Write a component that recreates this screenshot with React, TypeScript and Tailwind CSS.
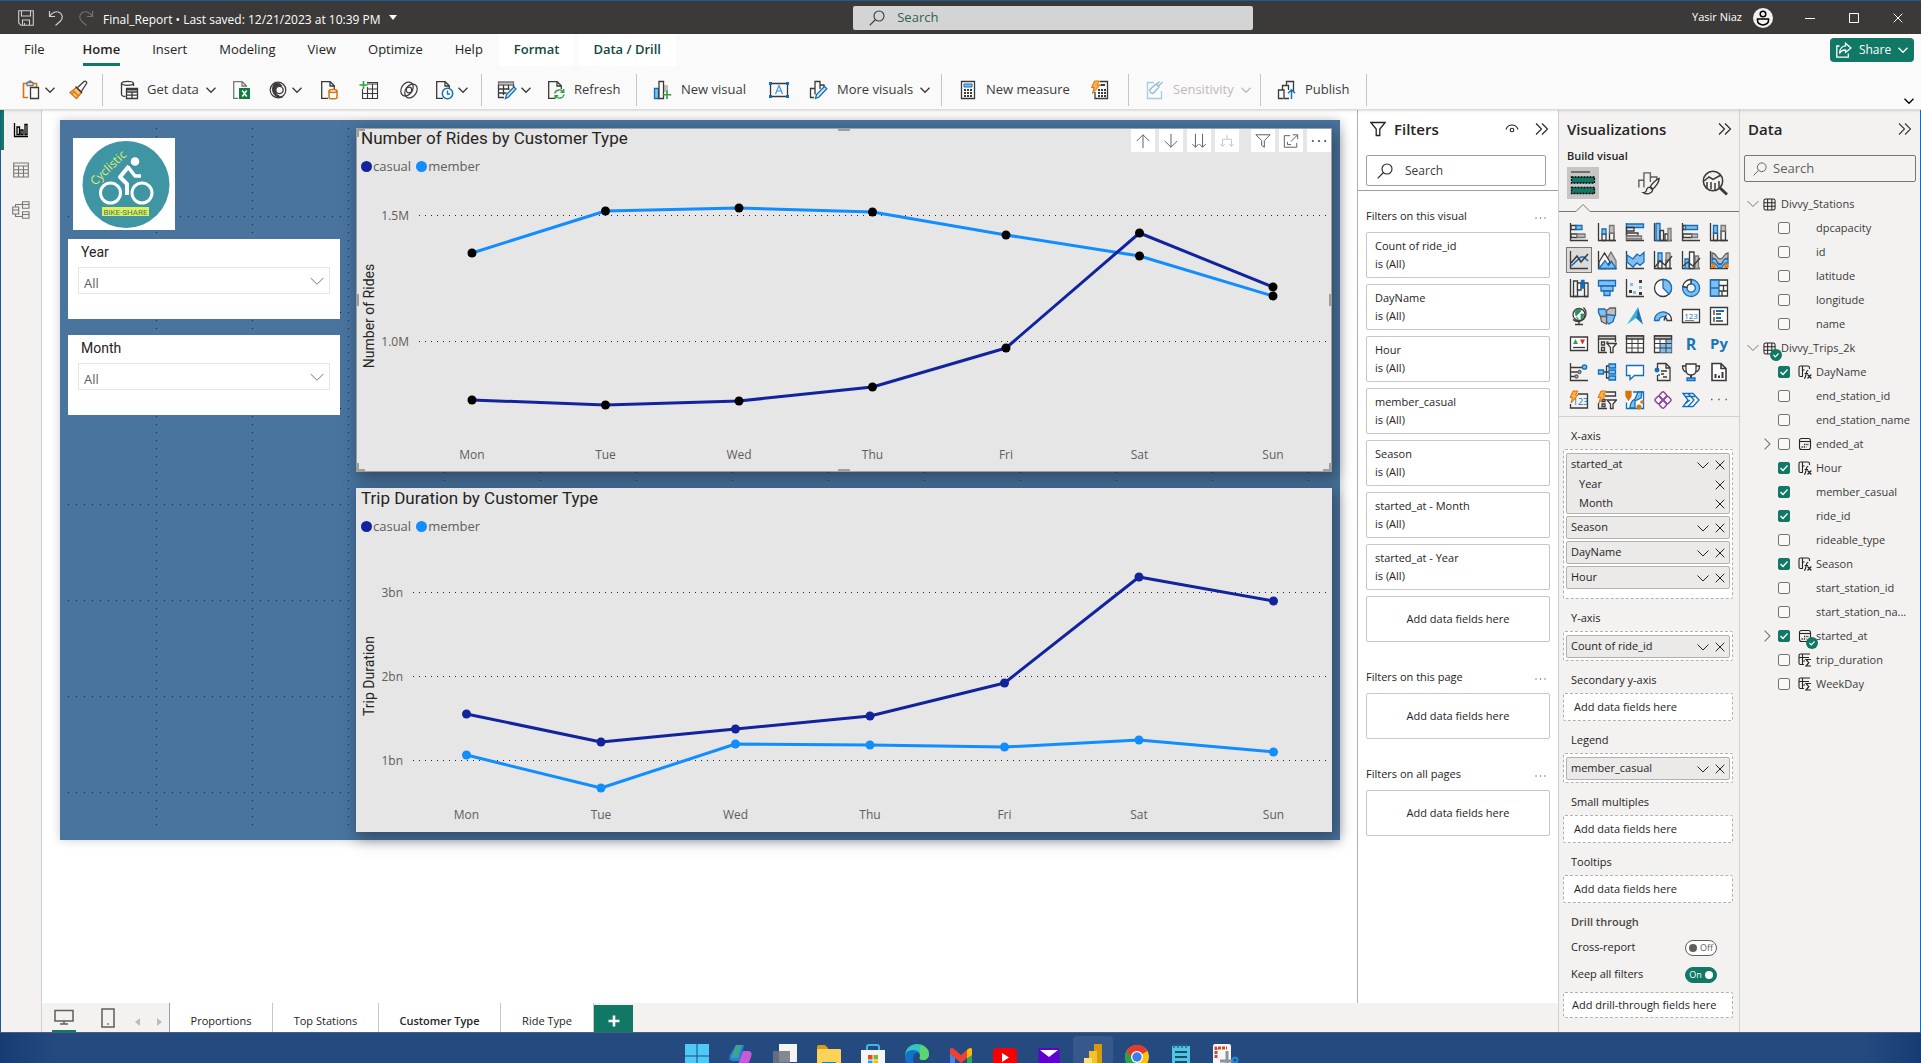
import type { ReactNode } from "react";
import clsx from "clsx";

const K = "#3b3a39";
const B = "#106ebe";
const L = "#83beec";
const G = "#c2c0be";
const O = "#d8730d";
const GREEN = "#117865";

type IconProps = { children: ReactNode; className?: string; box?: string };

const Icon = ({ children, className = "size-5", box = "0 0 20 20" }: IconProps) => (
  <svg
    viewBox={box}
    className={clsx("shrink-0", className)}
    fill="none"
    stroke="currentColor"
    strokeWidth="1.3"
    aria-hidden="true"
  >
    {children}
  </svg>
);

const ChevronDown = ({ className = "size-2.5" }: { className?: string }) => (
  <Icon box="0 0 10 10" className={className}>
    <path d="M.5 2.8 5 7.3l4.5-4.5" />
  </Icon>
);

const ChevronRight = () => (
  <Icon box="0 0 10 10" className="size-3">
    <path d="M3 .5 7.5 5 3 9.5" strokeWidth="0.9" />
  </Icon>
);

const DoubleChevron = () => (
  <Icon box="0 0 14 14" className="size-3.5">
    <path d="M1 1.5 6.5 7 1 12.5M7 1.5 12.5 7 7 12.5" strokeWidth="1.1" />
  </Icon>
);

const Magnifier = ({ className = "size-4" }: { className?: string }) => (
  <Icon box="0 0 16 16" className={className}>
    <circle cx="10" cy="6" r="5" strokeWidth="1.1" />
    <path d="M6.5 9.5.7 15.3" strokeWidth="1.1" />
  </Icon>
);

const Cross = () => (
  <Icon box="0 0 10 10" className="size-2.5">
    <path d="m.7.7 8.6 8.6m0-8.6L.7 9.3" strokeWidth="1" />
  </Icon>
);

const Dots = () => (
  <Icon box="0 0 14 4" className="h-1 w-3.5 text-[#605e5c]">
    <g fill="currentColor" stroke="none">
      <circle cx="2" cy="2" r="0.7" />
      <circle cx="6.5" cy="2" r="0.7" />
      <circle cx="11" cy="2" r="0.7" />
    </g>
  </Icon>
);

const Funnel = ({ className = "size-4" }: { className?: string }) => (
  <Icon box="0 0 16 16" className={className}>
    <path d="M.8 1.5h14.4L9.8 8v6.5H6.2V8z" />
  </Icon>
);

/* ---------- title bar ---------- */

const TitleBar = () => (
  <header className="grid h-[34px] grid-cols-[23fr_400px_18fr] items-center border-t border-[#1c5b8c] bg-[#3b3a39] text-white">
    <div className="flex items-center pl-[18px]">
      <button aria-label="Save" className="mr-[14px] text-[#d0cfce]">
        <Icon box="0 0 16 16" className="size-4">
          <path d="M.7.7h14.6v14.6H3L.7 13zM3.5 1v5h9V1M4.5 15v-5h7v5M6.5 13v2" strokeWidth="1.1" />
        </Icon>
      </button>
      <button aria-label="Undo" className="mr-[14px] text-[#d0cfce]">
        <Icon box="0 0 16 16" className="size-4">
          <path d="M1.5 1v5.5H7M1.7 6.2C4 2.5 8 .6 11.5 2.5s3.5 6 1 8.5l-5 4.5" strokeWidth="1.2" />
        </Icon>
      </button>
      <button aria-label="Redo" className="mr-[9px] text-[#73716f]">
        <Icon box="0 0 16 16" className="size-4">
          <path d="M14.5 1v5.5H9M14.3 6.2C12 2.5 8 .6 4.5 2.5s-3.5 6-1 8.5l5 4.5" strokeWidth="1.2" />
        </Icon>
      </button>
      <button className="flex items-center gap-2 pt-1 text-xs whitespace-nowrap">
        Final_Report • Last saved: 12/21/2023 at 10:39 PM
        <svg viewBox="0 0 8 5" className="mb-1 h-[5px] w-2" fill="currentColor" aria-hidden="true">
          <path d="M0 0h8L4 5z" />
        </svg>
      </button>
    </div>
    <label className="flex h-6 items-center gap-3 rounded-xs bg-[#d4d4d4] px-4 text-[#3b3a39]">
      <Magnifier />
      <input
        aria-label="Search commands"
        placeholder="Search"
        className="w-full bg-transparent text-[13px] outline-none placeholder:text-[#2f6357]"
      />
    </label>
    <div className="flex items-center justify-end pr-[18px]">
      <span className="mr-[11px] text-[11px]">Yasir Niaz</span>
      <button aria-label="Account" className="mr-8 flex size-5 items-center justify-center rounded-full bg-[#f3f2f1] text-black">
        <Icon box="0 0 20 20" className="size-5">
          <circle cx="10" cy="6" r="2.8" strokeWidth="1.5" />
          <path d="M4.5 11h11v1.5c0 2.5-2.5 4.5-5.5 4.5s-5.5-2-5.5-4.5z" strokeWidth="1.6" />
        </Icon>
      </button>
      <div className="flex gap-[34px]">
        <button aria-label="Minimize">
          <Icon box="0 0 10 10" className="size-2.5"><path d="M0 5.5h10" strokeWidth="1" /></Icon>
        </button>
        <button aria-label="Restore">
          <Icon box="0 0 10 10" className="size-2.5"><path d="M.5.5h9v9h-9z" strokeWidth="1" /></Icon>
        </button>
        <button aria-label="Close"><Cross /></button>
      </div>
    </div>
  </header>
);

/* ---------- ribbon ---------- */

const Tab = ({ name, active, tool }: { name: string; active?: boolean; tool?: boolean }) => (
  <button
    className={clsx(
      "flex h-8 items-center text-[13px]",
      tool ? "mr-1 bg-white px-[15px] font-semibold text-[#0f4a40]" : "px-4 text-[#252423]",
    )}
  >
    <span className={clsx("flex h-full items-center", active && "border-y-3 border-b-[#117865] border-t-transparent font-semibold")}>
      {name}
    </span>
  </button>
);

const Tabs = () => (
  <div className="flex items-start pl-2">
    <div className="mr-[6px]">
      <Tab name="File" />
    </div>
    <Tab name="Home" active />
    <Tab name="Insert" />
    <Tab name="Modeling" />
    <Tab name="View" />
    <Tab name="Optimize" />
    <Tab name="Help" />
    <Tab name="Format" tool />
    <Tab name="Data / Drill" tool />
    <button className="mt-1 mr-[7px] ml-auto flex h-6 w-[84px] items-center justify-center gap-[7px] rounded-sm bg-[#117865] text-xs text-white">
      <Icon box="0 0 16 16" className="size-4">
        <path d="M3.5 4H.8v11.2h11.5v-3.7" />
        <path d="M9.5 1.2 15 6l-5.500 4.500V8C6.500 8 4.500 9 3.500 11.500 3.500 7 6 4 9.500 3.800z" />
      </Icon>
      Share
      <ChevronDown />
    </button>
  </div>
);

const doc = <path d="M9 18.300H2.700V1.700h8.500l4.100 4.100V9M11 2v4h4.200" stroke={K} />;

const ribbonIcons = {
  paste: (
    <Icon>
      <path d="M7 17.500H2.500v-14H6m6 0h3.500V7" stroke={O} strokeWidth="1.6" />
      <path d="M6 2.500h6v3H6zM7.500 2.500a1.500 1.500 0 0 1 3 0" stroke="#797775" />
      <path d="M9.500 7.500h8v11h-8z" stroke={K} />
    </Icon>
  ),
  brush: (
    <Icon>
      <path d="m9 8 4 4 5.500-8.500c.8-1.200-1-3-2.200-2.200z" stroke={K} />
      <path d="M8.500 7.500 2 12.500l6.500 6 5-6z" fill="#fbc27c" stroke={O} />
      <path d="m5 10.500 5.500 5.500M3.500 13.500l3-1" stroke={O} />
      <path d="m7.500 6.500 6.500 6.500" stroke={K} />
    </Icon>
  ),
  getData: (
    <Icon>
      <g stroke={K}>
        <ellipse cx="8.500" cy="3.300" rx="6" ry="2" />
        <path d="M2.500 3.300v11.200c0 1 2 2 4 2M14.500 3.300V6" />
        <path d="M7.500 8.500h11v10h-11zM7.500 12h11M7.500 15.200h11M13 12v6.500" />
        <path d="M7.500 9.500h11" strokeWidth="2" />
      </g>
    </Icon>
  ),
  excel: (
    <Icon>
      <path d="M7 18.300H2.700V1.700h8.500l4.100 4.100V7M11 2v4h4.200" stroke="#797775" />
      <path d="M8 8h11v11H8z" fill="#107c41" stroke="none" />
      <path d="m11.300 10.500 4.400 6m0-6-4.400 6" stroke="#fff" strokeWidth="1.5" />
    </Icon>
  ),
  hub: (
    <Icon>
      <g stroke={K}>
        <circle cx="10" cy="10" r="7.800" strokeWidth="1.2" />
        <path d="M6 4C3.500 8 4 14 9 17c2 1 4 .8 5.500 0-5-.5-7.500-4-7-7.500C8 6 11 4.500 14 6c-1.500-2.500-5-4-8-2z" fill={K} strokeWidth="1" />
        <circle cx="11.500" cy="10" r="3.700" strokeWidth="1.3" />
      </g>
    </Icon>
  ),
  sql: (
    <Icon>
      {doc}
      <path d="M10 11v6.500c0 .8 1.800 1.300 4 1.300s4-.5 4-1.300V11" fill="#fff" stroke={O} strokeWidth="1.5" />
      <ellipse cx="14" cy="11" rx="4" ry="1.500" fill="#fff" stroke={O} strokeWidth="1.5" />
    </Icon>
  ),
  enter: (
    <Icon>
      <path d="M8 2.500h10.500v16h-15V9M8 4h10.500M3.500 13.500h15M8 9h10.500M8.500 7v11.500M13.500 4v14.500" stroke={K} strokeWidth="1.1" />
      <path d="M4.500 1v8M.5 5h8" stroke="#28a745" strokeWidth="1.6" />
    </Icon>
  ),
  dataverse: (
    <Icon>
      <g stroke={K} strokeWidth="1.2">
        <ellipse cx="8" cy="9" rx="5.500" ry="7.500" transform="rotate(35 8 9)" />
        <ellipse cx="12" cy="11" rx="5.500" ry="7.500" transform="rotate(35 12 11)" />
        <circle cx="10" cy="10" r="2.800" />
      </g>
    </Icon>
  ),
  recent: (
    <Icon>
      {doc}
      <circle cx="13.500" cy="13.500" r="5.200" fill="#fff" stroke={B} strokeWidth="1.5" />
      <path d="M13.500 10.500v3.500H16" stroke={B} />
    </Icon>
  ),
  transform: (
    <Icon>
      <path d="M1.500 2h15v3h-15z" fill={G} stroke="#797775" />
      <path d="M1.500 5v12.500H7M16.500 5v2M1.500 9h11M1.500 13h8M6.500 5v10M11.500 5v5" stroke={K} />
      <path d="m8.500 18.500 1-4L17 7l2 2-7.500 8z" fill="#cfe6f8" stroke={B} />
    </Icon>
  ),
  refresh: (
    <Icon>
      {doc}
      <path d="M8.800 13.500c.7-4 6.500-5 8.700-1.500m.2-3v3.300h-3.200M18 14.500c-.7 4-6.500 5-8.700 1.500m-.2 3v-3.300h3.200" stroke="#2f9e44" strokeWidth="1.4" />
    </Icon>
  ),
  newVisual: (
    <Icon>
      <path d="M1.500 8.500h4v10h-4z" fill={L} stroke={B} />
      <path d="M11 5h4v7h-4z" fill={G} stroke="none" />
      <path d="M6 1.500h4.500v17H6z" stroke={K} fill="#fff" />
      <path d="M14 10.500v8.500m-4.300-4.300h8.600" stroke="#2f9e44" strokeWidth="1.6" />
    </Icon>
  ),
  textBox: (
    <Icon>
      <path d="M1.500 3.500h17v13h-17z" stroke={K} />
      <g fill={B} stroke="none">
        <path d="M0 2h3v3H0zM17 2h3v3h-3zM0 15h3v3H0zM17 15h3v3h-3z" />
      </g>
      <path d="M6.500 14 10 5.500l3.500 8.500M7.700 11h4.600" stroke="#3a96dd" strokeWidth="1.2" />
    </Icon>
  ),
  moreVisuals: (
    <Icon>
      <path d="M5 17.500H1.500v-9H6m0 6v-13h5V9M11 5h4v2" stroke={K} />
      <path d="m6.500 18.500 1-4 8-8 2.300 2.300L10 17z" fill="#cfe6f8" stroke={B} />
    </Icon>
  ),
  measure: (
    <Icon>
      <path d="M3.500 1.500h13v17h-13z" stroke={K} fill="#fff" />
      <path d="M6 4h8v3H6z" fill={L} stroke={B} strokeWidth="1" />
      <path d="M6 10h8M6 13h8M6 16h8" stroke={K} strokeWidth="2" strokeDasharray="2 1" />
    </Icon>
  ),
  quick: (
    <Icon>
      <path d="M10 1.500h7.500v17H5V12" stroke={K} />
      <path d="M10.500 5h4.500" stroke={K} strokeWidth="2" />
      <path d="M8 10h8M8 13h8M8 16h8" stroke={K} strokeWidth="1.8" strokeDasharray="2 1" />
      <path d="M4.500 1h5L7 5h3l-7.500 8.500L4 7.500H1.500z" fill="#fbb040" stroke={O} strokeWidth="1" />
    </Icon>
  ),
  sensitivity: (
    <Icon>
      <path d="M9 2.500H2.500v16h14V11" stroke="#a9cbe2" />
      <path d="m6 13-1.500-3L11 4l3 3-6 6.500zM11.500 4.500l3-3m-1.500 5 4.500-4.500" stroke="#8fbcdb" />
    </Icon>
  ),
  publish: (
    <Icon>
      <path d="M6 18.500H1.500V10H7v8.500h5M5.500 9.500v-4h6V8M9.500 5V1.500h7V12M11.500 6v4" stroke={K} />
      <path d="M14.500 19v-9M11 13.200l3.500-3.500 3.500 3.500" stroke={B} strokeWidth="1.4" />
    </Icon>
  ),
};

type CmdProps = {
  icon: keyof typeof ribbonIcons;
  text?: string;
  label?: string;
  menu?: boolean;
  width: string;
  muted?: boolean;
};

const Cmd = ({ icon, text, label, menu, width, muted }: CmdProps) => (
  <button
    aria-label={label}
    disabled={muted}
    className={clsx(
      "flex h-8 shrink-0 items-center text-[13px] whitespace-nowrap",
      width,
      text ? "justify-start pl-2" : "justify-center",
      muted ? "text-[#bebbb8]" : "text-[#3b3a39]",
    )}
  >
    {ribbonIcons[icon]}
    {text && <span className="ml-2">{text}</span>}
    {menu && <ChevronDown className={clsx("size-2.5", text ? "ml-[7px]" : "ml-1")} />}
  </button>
);

const Group = ({ children }: { children: ReactNode }) => (
  <div className="flex items-center border-r border-[#c8c6c4] px-2">{children}</div>
);

const Ribbon = () => (
  <div className="relative z-10 h-[76px] border-b border-[#dcdbda] bg-[#fafafa] shadow-sm">
    <Tabs />
    <div className="mt-2 flex pl-[6px]">
      <Group>
        <Cmd icon="paste" label="Paste" menu width="w-12" />
        <Cmd icon="brush" label="Format painter" width="w-8" />
      </Group>
      <Group>
        <Cmd icon="getData" text="Get data" menu width="w-[110px]" />
        <Cmd icon="excel" label="Excel workbook" width="w-10" />
        <Cmd icon="hub" label="OneLake data hub" menu width="w-12" />
        <Cmd icon="sql" label="SQL Server" width="w-10" />
        <Cmd icon="enter" label="Enter data" width="w-10" />
        <Cmd icon="dataverse" label="Dataverse" width="w-10" />
        <Cmd icon="recent" label="Recent sources" menu width="w-11" />
      </Group>
      <Group>
        <Cmd icon="transform" label="Transform data" menu width="w-12" />
        <Cmd icon="refresh" text="Refresh" width="w-[90px]" />
      </Group>
      <Group>
        <Cmd icon="newVisual" text="New visual" width="w-[112px]" />
        <Cmd icon="textBox" label="Text box" width="w-11" />
        <Cmd icon="moreVisuals" text="More visuals" menu width="w-[132px]" />
      </Group>
      <Group>
        <Cmd icon="measure" text="New measure" width="w-[130px]" />
        <Cmd icon="quick" label="Quick measure" width="w-10" />
      </Group>
      <Group>
        <Cmd icon="sensitivity" text="Sensitivity" menu muted width="w-[115px]" />
      </Group>
      <Group>
        <Cmd icon="publish" text="Publish" width="w-[89px]" />
      </Group>
      <button aria-label="Collapse ribbon" className="mr-[7px] ml-auto self-end text-black">
        <ChevronDown />
      </button>
    </div>
  </div>
);

/* ---------- left rail ---------- */

const Rail = () => (
  <nav className="flex w-[42px] shrink-0 flex-col border-r border-l border-r-[#d2d0ce] border-l-[#1c5b8c] bg-[#f3f2f1] text-[#797775]">
    <button aria-label="Report view" className="flex h-10 items-center justify-center border-l-3 border-[#117865] pr-[3px] text-black">
      <Icon box="0 0 16 16" className="size-4">
        <path d="M1.500 1v13.500H15M4 5h2.500v7.500H4zM8 8h2v4.500H8zM12 2.500h2v10h-2z" />
      </Icon>
    </button>
    <button aria-label="Table view" className="flex h-10 items-center justify-center">
      <Icon box="0 0 16 16" className="size-4">
        <path d="M.7 1h14.600v14H.7zM.7 4h14.600M.7 7.700h14.600M.7 11.300h14.600M5.500 4v11M10.500 4v11" strokeWidth="1.1" />
      </Icon>
    </button>
    <button aria-label="Model view" className="flex h-10 items-center justify-center">
      <Icon box="0 0 18 18" className="size-[18px]">
        <path d="M.7 6h6v7h-6zM.7 9h6M10.500.7H17v6.500h-6.500zM10.500 3.500H17M10.500 10.700H17v6.500h-6.500zM10.500 13.500H17M3.500 6V3.500h7M3.500 13v2.500h7" strokeWidth="1.1" />
      </Icon>
    </button>
  </nav>
);

/* ---------- report page ---------- */

const Logo = () => (
  <svg viewBox="0 0 102 92" className="mt-[10px] mb-[9px] ml-[5px] h-[92px] w-[102px] bg-white" role="img" aria-label="Cyclistic Bike-Share">
    <circle cx="53" cy="46.500" r="43.500" fill="#4095a5" />
    <g stroke="#fff" fill="none" strokeWidth="3">
      <circle cx="37.500" cy="55" r="10" />
      <circle cx="69" cy="55" r="10" />
    </g>
    <circle cx="62" cy="23.500" r="4.300" fill="#fff" />
    <path d="m56 28-9 11 7 7v11" fill="none" stroke="#fff" strokeWidth="4" strokeLinejoin="round" />
    <path d="m55 29 7 9h6" fill="none" stroke="#fff" strokeWidth="3.5" strokeLinejoin="round" />
    <path id="logo-arc" d="M22 48 60 12" fill="none" />
    <text fill="#d9f26b" fontSize="12" fontFamily="Open Sans, sans-serif">
      <textPath href="#logo-arc">Cyclistic</textPath>
    </text>
    <path d="M29 69h47v9H29z" fill="#dff05f" />
    <text x="52.500" y="76.500" fill="#3a7c6b" fontSize="8" textAnchor="middle" fontFamily="Roboto, sans-serif">
      BIKE-SHARE
    </text>
  </svg>
);

const Slicer = ({ name }: { name: string }) => (
  <label className="block h-20 bg-white px-[10px] pt-[3px]">
    <span className="mb-[5px] block pl-[3px] font-[Roboto,sans-serif] text-sm leading-5 text-[#252423]">{name}</span>
    <span className="grid items-center">
      <select className="col-start-1 row-start-1 h-[27px] appearance-none border border-[#e6e6e6] pt-1 pl-[5px] text-[13px] leading-5 text-[#605e5c]">
        <option>All</option>
      </select>
      <span className="pointer-events-none col-start-1 row-start-1 mr-[6px] justify-self-end text-[#797775]">
        <Icon box="0 0 14 14" className="size-3.5">
          <path d="M.7 4 7 10.300 13.300 4" strokeWidth="1" />
        </Icon>
      </span>
    </span>
  </label>
);

const DAYS = ["Mon", "Tue", "Wed", "Thu", "Fri", "Sat", "Sun"];

type ChartProps = {
  title: string;
  axis: string;
  startX: number;
  stepX: number;
  gridX: number;
  axisY: number;
  ticks: { label: string; y: number }[];
  casual: number[];
  member: number[];
  dot?: string;
  selected?: boolean;
};

const visualTools = [
  { name: "Drill up", d: "M9 17V2M2 9l7-7 7 7" },
  { name: "Drill down", d: "M9 1v15M2 9l7 7 7-7" },
  { name: "Go to next level", d: "M5 1v15M1.5 12.5 5 16l3.5-3.5M13 1v15M9.5 12.5 13 16l3.5-3.5" },
  { name: "Expand down", d: "M9 2v5M4 15V7h10v8M1.5 12.5 4 15l2.5-2.5M11.5 12.5 14 15l2.5-2.5", faint: true },
  { name: "Filters on visual", d: "M1 2h16l-6.5 6.5V16l-3-2V8.5z", gap: true },
  { name: "Focus mode", d: "M8 3H1.5v13h14v-5M5 10v3h4M11 2h5.5v5M16 2.5 9 9.5" },
  { name: "More options", d: "M1 9h2M8 9h2M15 9h2" },
];

const Legend = () => (
  <div className="flex items-center pt-2 pl-[5px] text-[13px] leading-5 text-[#605e5c]">
    <span className="mr-px size-[11px] rounded-full bg-[#12239e]" />
    casual
    <span className="mr-px ml-[5px] size-[11px] rounded-full bg-[#118dff]" />
    member
  </div>
);

const Chart = ({ title, axis, startX, stepX, gridX, axisY, ticks, casual, member, dot, selected }: ChartProps) => {
  const series = [
    { color: "#118dff", values: member },
    { color: "#12239e", values: casual },
  ];

  return (
    <section
      className={clsx(
        "relative min-h-0 flex-1 bg-[#e6e6e6] shadow-[3px_5px_14px_2px_rgba(30,40,55,0.5)]",
        selected && "outline-1 -outline-offset-1 outline-[#a19f9d]",
      )}
    >
      <h2 className="pl-[5px] font-[Roboto,sans-serif] text-[17px] leading-5 text-[#252423]">{title}</h2>
      <Legend />
      <svg viewBox="0 0 976 344" className="absolute inset-0 size-full" role="img" aria-label={title}>
        {ticks.map((t) => (
          <g key={t.label}>
            <line x1={gridX} x2="971" y1={t.y} y2={t.y} stroke="#252423" strokeDasharray="1 5" />
            <text x={gridX - 10} y={t.y + 4} textAnchor="end" fontSize="12" fill="#605e5c">
              {t.label}
            </text>
          </g>
        ))}
        <text
          transform={`translate(18 ${axisY}) rotate(-90)`}
          textAnchor="middle"
          fontSize="14"
          fontFamily="Roboto, sans-serif"
          fill="#252423"
        >
          {axis}
        </text>
        {DAYS.map((day, i) => (
          <text key={day} x={startX + i * stepX} y="331" textAnchor="middle" fontSize="12" fill="#605e5c">
            {day}
          </text>
        ))}
        {series.map((s) => (
          <polyline
            key={s.color}
            points={s.values.map((v, i) => `${startX + i * stepX},${v}`).join(" ")}
            fill="none"
            stroke={s.color}
            strokeWidth="3"
            strokeLinejoin="round"
          />
        ))}
        {series.map((s) =>
          s.values.map((v, i) => (
            <circle key={`${s.color}${i}`} cx={startX + i * stepX} cy={v} r="4.5" fill={dot ?? s.color} />
          )),
        )}
        {selected && (
          <g stroke="#a19f9d" strokeWidth="3" fill="none">
            <path d="M1.500 9V1.500H9M967 1.500h7.500V9M974.500 335v7.500H967M9 342.500H1.500V335" />
            <path d="M482 1.500h12M482 342.500h12M1.500 166v12M974.500 166v12" />
          </g>
        )}
      </svg>
      {selected && (
        <div className="absolute top-px right-px flex gap-1">
          {visualTools.map((t) => (
            <button
              key={t.name}
              aria-label={t.name}
              className={clsx(
                "flex h-[23px] w-6 items-center justify-center bg-white",
                t.gap && "ml-2",
                t.faint ? "text-[#c8c6c4]" : "text-[#605e5c]",
              )}
            >
              <Icon box="0 0 18 18" className="size-4">
                <path d={t.d} strokeWidth={t.name === "More options" ? 2 : 1.1} />
              </Icon>
            </button>
          ))}
        </div>
      )}
    </section>
  );
};

const Canvas = () => (
  <main className="min-w-0 flex-1 bg-white pt-[10px] pr-[17px] pl-[18px]">
    <div className="relative flex aspect-video w-full gap-4 bg-[#48749e] p-2 shadow-[0_0_10px_rgba(0,0,0,0.2)]">
      <div className="absolute inset-2 bg-[radial-gradient(circle_at_0.5px_0.5px,#12304d_0.8px,transparent_1px),radial-gradient(circle_at_0.5px_0.5px,#12304d_0.8px,transparent_1px)] bg-[size:96px_8px,8px_96px] bg-[position:88px_0px,0px_88px]" />
      <div className="relative flex w-[272px] shrink-0 flex-col">
        <Logo />
        <div className="flex flex-col gap-4">
          <Slicer name="Year" />
          <Slicer name="Month" />
        </div>
      </div>
      <div className="relative flex min-w-0 flex-1 flex-col gap-4">
        <Chart
          title="Number of Rides by Customer Type"
          axis="Number of Rides"
          startX={116}
          stepX={133.5}
          gridX={63}
          axisY={188}
          ticks={[
            { label: "1.5M", y: 87.5 },
            { label: "1.0M", y: 213.5 },
          ]}
          casual={[272, 277, 273, 259, 220, 105, 159]}
          member={[125, 83, 80, 84, 107, 128, 168]}
          dot="#000"
          selected
        />
        <Chart
          title="Trip Duration by Customer Type"
          axis="Trip Duration"
          startX={110.5}
          stepX={134.5}
          gridX={57}
          axisY={188}
          ticks={[
            { label: "3bn", y: 104.5 },
            { label: "2bn", y: 188.5 },
            { label: "1bn", y: 272.5 },
          ]}
          casual={[226, 254, 241, 228, 195, 89, 113]}
          member={[267, 300, 256, 257, 259, 252, 264]}
        />
      </div>
    </div>
  </main>
);

/* ---------- filters pane ---------- */

const FILTERS = ["Count of ride_id", "DayName", "Hour", "member_casual", "Season", "started_at - Month", "started_at - Year"];

const FilterHeading = ({ text }: { text: string }) => (
  <div className="flex items-center justify-between pr-[2px] leading-4">
    <h3>{text}</h3>
    <button aria-label={`${text} options`} className="pt-1"><Dots /></button>
  </div>
);

const AddCard = () => (
  <div className="flex h-[46px] items-center justify-center rounded-xs border border-[#c8c6c4]">Add data fields here</div>
);

const FiltersPane = () => (
  <aside className="w-[201px] shrink-0 border-l border-[#b3b0ad] bg-white text-[11px] text-[#252423]">
    <div className="flex h-[38px] items-center pr-[9px] pl-3">
      <Funnel />
      <h2 className="ml-2 flex-1 text-[15px] font-semibold">Filters</h2>
      <button aria-label="Show filters" className="mr-4">
        <Icon box="0 0 14 14" className="size-3.5">
          <path d="M1 7.5C2 4.5 4.300 3 7 3s5 1.500 6 4.500" strokeWidth="1.1" />
          <circle cx="7" cy="8" r="1.8" strokeWidth="1.1" />
        </Icon>
      </button>
      <button aria-label="Collapse filters"><DoubleChevron /></button>
    </div>
    <div className="border-b border-[#a19f9d] pt-[7px] pr-3 pb-1 pl-2">
      <label className="flex h-[31px] items-center gap-3 rounded-xs border border-[#a19f9d] px-[10px]">
        <Magnifier />
        <input aria-label="Search filters" placeholder="Search" className="w-full text-xs outline-none placeholder:text-[#3b3a39]" />
      </label>
    </div>
    <div className="px-2 pt-[17px]">
      <FilterHeading text="Filters on this visual" />
      <ul className="mt-2 flex flex-col gap-[6px]">
        {FILTERS.map((f) => (
          <li key={f} className="flex h-[46px] flex-col justify-center rounded-xs border border-[#c8c6c4] pl-2 leading-[18px]">
            <span>{f}</span>
            <span>is (All)</span>
          </li>
        ))}
        <li><AddCard /></li>
      </ul>
      <div className="mt-[27px] flex flex-col gap-2">
        <FilterHeading text="Filters on this page" />
        <AddCard />
      </div>
      <div className="mt-[27px] flex flex-col gap-2">
        <FilterHeading text="Filters on all pages" />
        <AddCard />
      </div>
    </div>
  </aside>
);

/* ---------- page tabs ---------- */

const PAGES = [
  { name: "Proportions", width: "w-[103px]" },
  { name: "Top Stations", width: "w-[106px]" },
  { name: "Customer Type", width: "w-[122px]", active: true },
  { name: "Ride Type", width: "w-[93px]" },
];

const PageTabs = () => (
  <div className="flex h-[29px] shrink-0 bg-[#f3f2f1] text-[#605e5c]">
    <div className="flex w-[128px] items-center border-r border-[#a19f9d] pl-[10px]">
      <button aria-label="Desktop layout" className="flex h-full w-6 items-center justify-center border-b-2 border-[#117865]">
        <Icon box="0 0 20 16" className="h-4 w-5">
          <path d="M1 1.500h18v10.500H1zM10 12v3M6 15h8" strokeWidth="1.5" />
        </Icon>
      </button>
      <button aria-label="Mobile layout" className="mr-5 ml-[25px]">
        <Icon box="0 0 14 20" className="h-5 w-3.5">
          <path d="M1 1h12v18H1z" strokeWidth="1.5" />
          <path d="M6.200 16h1.600" strokeWidth="1.6" />
        </Icon>
      </button>
      <div className="flex gap-4 pt-2 text-[#bebbb8]">
        <button aria-label="Previous page">
          <svg viewBox="0 0 6 8" className="h-2 w-1.5" fill="currentColor"><path d="M5 0v8L0 4z" /></svg>
        </button>
        <button aria-label="Next page">
          <svg viewBox="0 0 6 8" className="h-2 w-1.5" fill="currentColor"><path d="M0 0v8l5-4z" /></svg>
        </button>
      </div>
    </div>
    {PAGES.map((p) => (
      <button
        key={p.name}
        className={clsx(
          "flex items-center justify-center border-r border-[#c8c6c4] bg-white pt-[7px] text-[11px] text-[#252423]",
          p.width,
          p.active && "font-semibold",
        )}
      >
        {p.name}
      </button>
    ))}
    <button aria-label="New page" className="mt-[2px] flex w-[39px] items-center justify-center bg-[#117865] pt-1 text-white">
      <Icon box="0 0 12 12" className="size-3"><path d="M6 .5v11M.5 6h11" strokeWidth="2.6" /></Icon>
    </button>
  </div>
);

/* ---------- visualizations pane ---------- */

const axes = <path d="M1.500 1v17.500H19" stroke={K} />;

const VISUALS: { name: string; art: ReactNode }[] = [
  {
    name: "Stacked bar chart",
    art: <>{axes}<path d="M2 3.500h5v4H2zM2 12h6v3.500H2z" stroke={K} /><path d="M7 3.500h6v4H7z" fill={L} stroke={B} /><path d="M8 12h8v3.500H8z" fill={G} stroke="#797775" /></>,
  },
  {
    name: "Stacked column chart",
    art: <>{axes}<path d="M5 12h4v6.500H5zM12.500 11H17v7.500h-4.500z" stroke={K} /><path d="M5 7h4v5H5z" fill={L} stroke={B} /><path d="M12.500 3.500H17V11h-4.500z" fill={G} stroke="#797775" /></>,
  },
  {
    name: "Clustered bar chart",
    art: <>{axes}<path d="M1.500 2h17v3.500h-17z" fill={L} stroke={B} /><path d="M1.500 5.500H9v3.500H1.500z" stroke={K} /><path d="M1.500 11h11.500v3H1.500z" stroke={K} /><path d="M1.500 14h15v3h-15z" fill={G} stroke="#797775" /></>,
  },
  {
    name: "Clustered column chart",
    art: <>{axes}<path d="M3 1.500h4v17H3z" fill={L} stroke={B} /><path d="M7 8.500h3.500v10H7zM12 12h3v6.500h-3z" stroke={K} /><path d="M15 6.500h3v12h-3z" fill={G} stroke="#797775" /></>,
  },
  {
    name: "100% stacked bar chart",
    art: <>{axes}<path d="M2 3.500h2.500v4H2zM2 12h9v3.500H2z" stroke={K} /><path d="M4.500 3.500h12v4h-12z" fill={L} stroke={B} /><path d="M11 12h5.500v3.500H11z" fill={G} stroke="#797775" /></>,
  },
  {
    name: "100% stacked column chart",
    art: <>{axes}<path d="M4.500 11h4v7.500h-4zM12 9h4.500v9.500H12z" stroke={K} /><path d="M4.500 3.500h4V11h-4z" fill={L} stroke={B} /><path d="M12 3.500h4.500V9H12z" fill={G} stroke="#797775" /></>,
  },
  {
    name: "Line chart",
    art: <>{axes}<path d="m2 16 10-9 3 0 4 4" stroke={B} strokeWidth="1.6" /><path d="m2 13 6-7 4 6 7-8" stroke={K} strokeWidth="1.5" /></>,
  },
  {
    name: "Area chart",
    art: <>{axes}<path d="m7 14 7-12 5 9v7.500H7z" fill={G} stroke="#797775" /><path d="m2 12 5.500-9 5.500 9-5 6.500H2z" fill="#fff" stroke={K} /><path d="m2 18.500 6-8 3.500 5 3-4 4.500 7z" fill={L} stroke={B} /></>,
  },
  {
    name: "Stacked area chart",
    art: <>{axes}<path d="m2 5 6 4 4-5 3 2 4-3.500V12l-4 3.500-3-2.500-4 4-6-5z" fill={L} stroke={B} /></>,
  },
  {
    name: "Line and stacked column chart",
    art: <>{axes}<path d="M5 11h4v7.500H5zM13 10h4v8.500h-4z" stroke={K} /><path d="M5 3h4v8H5z" fill={L} stroke={B} /><path d="M13 3h4v7h-4z" fill={G} stroke="#797775" /><path d="m2 17 5-6 5 4 7-9" stroke={K} /></>,
  },
  {
    name: "Line and clustered column chart",
    art: <>{axes}<path d="M4 9h4v9.500H4z" fill={L} stroke={B} /><path d="M14 6h3.500v12.500H14z" fill={G} stroke="#797775" /><path d="M8.500 2H13v16.500H8.500z" fill="#fff" stroke={K} /><path d="m2 16 5-4 5 4 7-8" stroke={K} /></>,
  },
  {
    name: "Ribbon chart",
    art: <>{axes}<path d="M3 3c5 0 4 6 8 6s4-6 8-6v5c-4 0-4 6-8 6s-3-6-8-6z" fill={G} stroke="#605e5c" /><path d="M3 9h3c2 0 2 6 5 6s3-6 5-6h3v4h-2c-2 0-3 5-6 5s-4-5-6-5H3z" fill={L} stroke={B} /><path d="M3 14h3v3H3zM16 14h3v3h-3z" fill="#f4a460" stroke={O} /></>,
  },
  {
    name: "Waterfall chart",
    art: <>{axes}<path d="M4.500 3h4v15.500h-4zM15.500 5H19v13.500h-3.500z" stroke={K} /><path d="M8.500 5H12v7H8.500z" fill="#fff" stroke={K} /><path d="M12.500 2.500H15V10h-2.500z" fill={B} stroke={B} /></>,
  },
  {
    name: "Funnel",
    art: <><path d="M1.500 2.500h17V8h-17z" fill={L} stroke={B} /><path d="M4 8h12v5H4z" fill={L} stroke={B} /><path d="M7 13h6v4.500H7z" fill={L} stroke={B} /></>,
  },
  {
    name: "Scatter chart",
    art: <>{axes}<g stroke="none"><path d="M5 5h3v3H5zM14 8h3v3h-3zM8 13h3v3H8z" fill={L} /><path d="M14 2h3v3h-3zM4 12h3v3H4zM14 14h3v3h-3z" fill={K} /></g></>,
  },
  {
    name: "Pie chart",
    art: <><circle cx="10" cy="10" r="8.500" fill="#fff" stroke={K} /><path d="M10 10V1.500a8.500 8.500 0 0 1 6 14.500z" fill={L} stroke={B} /></>,
  },
  {
    name: "Donut chart",
    art: <><circle cx="10" cy="10" r="6.300" stroke={L} strokeWidth="4.5" /><path d="M10 1.500a8.500 8.500 0 1 1-8.300 7L6 9.500A4.200 4.200 0 1 0 10 5.800z" stroke={B} /><path d="M10 1.500A8.500 8.500 0 0 0 1.700 8.500L6 9.500a4.200 4.200 0 0 1 4-3.700z" fill="#fff" stroke={K} /></>,
  },
  {
    name: "Treemap",
    art: <><path d="M1.500 2h17v16h-17z" fill="#fff" stroke={K} /><path d="M1.500 2H10v8H1.500zM1.500 10H10v8H1.500z" fill={L} stroke={B} /><path d="M10 7.500h8.500M14.500 7.500V13M10 13h8.500M13 13v5" stroke={K} /></>,
  },
  {
    name: "Map",
    art: <><circle cx="10" cy="8.500" r="6" stroke={K} fill="#fff" /><path d="M6 6c2-3 4-3 5-3l1 2-3 3-2 2zM12 8l3 0-1 4-2 1zM7 11l2 1v2" fill="#2f8f5b" stroke="#2f8f5b" strokeWidth="0.8" /><path d="M14.500 1.500c5 5 2 13-5 14-2 0-4-.5-5.500-2M10 16v2.500M6 18.500h8" stroke={K} /></>,
  },
  {
    name: "Filled map",
    art: <><path d="M1.500 3h6l2 1.500v6l-6 0-2-4z" fill={L} stroke={B} /><path d="M9.500 4.500 13 2h5.500v7l-5 1.500-4-2z" fill={G} stroke="#605e5c" /><path d="M9.500 8.500 18 9.500l-2 6-4 2.500-2.500-2z" fill={L} stroke={B} /><path d="m3.500 10.500 1 5 5 2.500v-7.500z" fill={G} stroke="#605e5c" /></>,
  },
  {
    name: "Azure map",
    art: <><path d="M13 1 2 18.500l9-6.500z" fill="#37b3d9" stroke="none" /><path d="m13 1 5 17.500-7-6.500z" fill="#1c72b8" stroke="none" /></>,
  },
  {
    name: "Gauge",
    art: <><path d="M1.500 14.500a8.500 8.500 0 0 1 14-6.500l-3 3.500a4 4 0 0 0-6.500 3z" fill={L} stroke={B} /><path d="M15 7.500c2.200 1.500 3.500 4 3.500 7H14c0-1.200-.5-2.500-1.500-3" fill="#fff" stroke={K} /><path d="m11 14.500 2-5" stroke={K} strokeWidth="1.6" /></>,
  },
  {
    name: "Card",
    art: <><path d="M1.500 3.500h17v13h-17z" fill="#fff" stroke={K} /><text x="10" y="12.500" fontSize="8" textAnchor="middle" fill={B} stroke="none">123</text><path d="M4 14.500h9" stroke="#605e5c" strokeWidth="0.8" /></>,
  },
  {
    name: "Multi-row card",
    art: <><path d="M1.500 1.500h17v17h-17z" fill="#fff" stroke={K} /><path d="M5 4v5M5 11v5" stroke={K} /><path d="M7 5h8M7 12h5" stroke={B} strokeWidth="1.8" /><path d="M7 8h5M7 15h7" stroke={K} /></>,
  },
  {
    name: "KPI",
    art: <><path d="M1.500 3h17v13.500h-17z" fill="#fff" stroke={K} /><path d="m4 10 2.500-5L9 10z" fill="#2f9e5b" stroke="none" /><path d="m11 5.500 2.500 5 2.500-5z" fill="#d92c2c" stroke="none" /><path d="M4 13.500h12" stroke={K} /></>,
  },
  {
    name: "Slicer",
    art: <><path d="M1.500 2h17v3h-17z" fill={G} stroke={K} /><path d="M1.500 5v13.500H10M18.500 5v3M4.500 8h3v3h-3zM4.500 13.500h3v3h-3zM9.500 8h2" stroke={K} /><path d="M10 9.500h9.500L16 13.500v5h-2.500v-5z" fill="#fff" stroke={K} /></>,
  },
  {
    name: "Table",
    art: <><path d="M1.500 2h17v16.500h-17z" fill="#fff" stroke={K} /><path d="M1.500 2h17v3h-17z" fill={G} stroke={K} /><path d="M1.500 9.500h17M1.500 14h17M7 5v13.500M13 5v13.500" stroke={K} strokeWidth="1" /></>,
  },
  {
    name: "Matrix",
    art: <><path d="M1.500 2h17v16.500h-17z" fill="#fff" stroke={K} /><path d="M7 9.500h11.500v9H7z" fill={L} stroke="none" /><path d="M13 5h5.500v4.500H13z" fill={L} stroke="none" /><path d="M1.500 2h17v3h-17z" fill={G} stroke={K} /><path d="M1.500 9.500h17M1.500 14h17M7 5v13.500M13 5v13.500" stroke={K} strokeWidth="1" /></>,
  },
  {
    name: "R script visual",
    art: <text x="10" y="16" fontSize="16" fontWeight="700" textAnchor="middle" fill="#1b75bb" stroke="none">R</text>,
  },
  {
    name: "Python visual",
    art: <text x="10" y="15" fontSize="15" fontWeight="700" textAnchor="middle" fill="#1b75bb" stroke="none">Py</text>,
  },
  {
    name: "Key influencers",
    art: <>{axes}<path d="M2 5.500h11M2 10h7M2 14.500h4" stroke={K} /><circle cx="15.500" cy="5" r="2.200" fill={L} stroke={B} /><circle cx="10.500" cy="10" r="1.500" fill={G} stroke="#605e5c" /><circle cx="7.500" cy="14.500" r="1.500" fill={G} stroke="#605e5c" /></>,
  },
  {
    name: "Decomposition tree",
    art: <><path d="M6 10h3.500M12 4H9.500v12H12M9.500 10H12" stroke={K} /><path d="M1.500 8h5v4h-5zM12 2h6.500v4H12zM12 8h6.500v4H12zM12 14h6.500v4H12z" fill={L} stroke={B} /></>,
  },
  {
    name: "Q&A",
    art: <path d="M1.500 3.500h17v10h-9L5 17.500v-4H1.500z" fill="#fff" stroke={B} />,
  },
  {
    name: "Smart narrative",
    art: <><path d="M4.500 9V1.500H13l4 4v13H4.500V13M13 2v4h4" stroke={K} /><path d="M8 9h6M8 12h3M10 15h4" stroke={K} /><circle cx="4" cy="8" r="1.800" fill={B} stroke={B} /><path d="M5 13h2" stroke={B} /></>,
  },
  {
    name: "Goals",
    art: <><path d="M5 2h10v6c0 3-2 5-5 5s-5-2-5-5z" fill="#fff" stroke={K} /><path d="M5 4H1.500c0 4 1.500 5.500 4 6M15 4h3.500c0 4-1.500 5.500-4 6" stroke={K} /><path d="M10 13v3" stroke={K} strokeWidth="2" /><path d="M6 16h8v2.500H6z" fill={L} stroke={B} /></>,
  },
  {
    name: "Paginated report",
    art: <><path d="M3 1.500h9l5 5v12H3zM12 1.500v5h5" fill="#fff" stroke={K} strokeWidth="1.6" /><path d="M6.500 16v-4M10 16v-2.500M13.500 16V10" stroke={K} strokeWidth="2" /></>,
  },
  {
    name: "Card (new)",
    art: <><path d="M9 4h9.500v14H1.500v-4" stroke={K} fill="none" /><text x="11.500" y="14.500" fontSize="9" textAnchor="middle" fill={B} stroke="none">123</text><path d="M4 1h5L6.500 5H9l-7 8 1.500-5.500H1z" fill="#fbb040" stroke={O} strokeWidth="1" /></>,
  },
  {
    name: "Slicer (new)",
    art: <><path d="M9 2h9.500v4H8M1.500 13v5.500H10M5 9.500h3v2H5zM5 14h3v2.500H5z" stroke={K} /><path d="M10 10h9.500L16 14v4.500h-2.500V14z" fill="#fff" stroke={K} /><path d="M4 1h5L6.500 5H9l-7 8 1.500-5.500H1z" fill="#fbb040" stroke={O} strokeWidth="1" /></>,
  },
  {
    name: "ArcGIS Maps",
    art: <><path d="M8 2h10.500v16.500h-17v-6" fill="#fff" stroke={B} /><path d="M13 2h4l-1 6-6 3v7H5c0-4 1-7 5-9z" fill={L} stroke={B} /><path d="M1 1.500h5v4.500L3.500 10 1 6z" fill={O} stroke={O} /><circle cx="17" cy="12" r="1.800" fill={O} stroke="none" /><circle cx="14" cy="17" r="2.500" fill={O} stroke="none" /></>,
  },
  {
    name: "Power Apps",
    art: (
      <g stroke="#8a3fa0" strokeWidth="1.4">
        <rect x="7" y="2.500" width="6" height="6" rx="1.500" transform="rotate(45 10 5.500)" />
        <rect x="7" y="11.500" width="6" height="6" rx="1.500" transform="rotate(45 10 14.500)" />
        <rect x="2.500" y="7" width="6" height="6" rx="1.500" transform="rotate(45 5.500 10)" />
        <rect x="11.500" y="7" width="6" height="6" rx="1.500" transform="rotate(45 14.500 10)" />
      </g>
    ),
  },
  {
    name: "Power Automate",
    art: <><path d="M2 3.500h10l6 6.500-6 6.500H2l5-6.500z" fill="#fff" stroke={B} /><path d="M7 3.500 13 10l-6 6.500M4 6.500h10M4.500 13.500 9 10" stroke={B} /></>,
  },
  {
    name: "Get more visuals",
    art: <path d="M2 9.500h1.500M9.200 9.500h1.500M16.500 9.500H18" stroke="#605e5c" strokeWidth="1.5" />,
  },
];

const Pill = ({ name, children }: { name: string; children?: ReactNode }) => (
  <div className="rounded-xs border border-[#b3b0ad] bg-[#ebeae9]">
    <div className="flex h-[21px] items-center pr-1 pl-1">
      <span className="flex-1">{name}</span>
      <button aria-label={`${name} menu`} className="mr-[6px]">
        <Icon box="0 0 12 12" className="size-3"><path d="m.5 3.500 5.500 5.500 5.500-5.500" strokeWidth="1" /></Icon>
      </button>
      <button aria-label={`Remove ${name}`}><Cross /></button>
    </div>
    {children}
  </div>
);

const SubField = ({ name }: { name: string }) => (
  <div className="flex h-[19px] items-center pr-1 pl-3">
    <span className="flex-1">{name}</span>
    <button aria-label={`Remove ${name}`}><Cross /></button>
  </div>
);

const Well = ({ title, children }: { title: string; children?: ReactNode }) => (
  <section>
    <h3 className="flex h-8 items-center pt-[6px] pl-2">{title}</h3>
    {children ? (
      <div className="flex flex-col gap-[2px] rounded-xs border border-dashed border-[#b3b0ad] bg-white px-[2px] pt-[3px] pb-[2px]">{children}</div>
    ) : (
      <div className="flex h-7 items-center rounded-xs border border-dashed border-[#b3b0ad] bg-white pl-[10px]">Add data fields here</div>
    )}
  </section>
);

const Toggle = ({ name, on }: { name: string; on?: boolean }) => (
  <label className="flex h-[27px] items-center justify-between pr-4 pl-2">
    {name}
    <input type="checkbox" role="switch" defaultChecked={on} className="sr-only" />
    <span
      className={clsx(
        "flex h-4 w-8 items-center justify-center gap-[3px] rounded-full border text-[9px] leading-none",
        on ? "flex-row-reverse border-[#117865] bg-[#117865] text-white" : "border-[#605e5c] bg-white text-[#605e5c]",
      )}
    >
      <span className={clsx("size-2 rounded-full", on ? "bg-white" : "bg-[#605e5c]")} />
      {on ? "On" : "Off"}
    </span>
  </label>
);

const VisualizationsPane = () => (
  <aside className="flex w-[182px] shrink-0 flex-col border-x border-[#d2d0ce] bg-[#f3f2f1] text-[11px] text-[#252423]">
    <div className="flex h-[38px] items-center justify-between pr-[7px] pl-2">
      <h2 className="text-[15px] font-semibold">Visualizations</h2>
      <button aria-label="Collapse visualizations"><DoubleChevron /></button>
    </div>
    <h3 className="pl-2 leading-4 font-semibold">Build visual</h3>
    <div className="flex items-center justify-between pt-[3px] pr-2 pl-2">
      <button aria-label="Build visual" className="flex size-8 items-center justify-center bg-[#c8c6c4]">
        <Icon box="0 0 26 26" className="size-[26px]">
          <path d="M1 2h19" stroke={K} strokeWidth="1.2" />
          <path d="M1.500 7h23v6h-23zM1.500 17.500h23v6h-23z" fill={GREEN} stroke="#000" strokeDasharray="2 1" />
        </Icon>
      </button>
      <button aria-label="Format visual" className="flex size-8 items-center justify-center">
        <Icon box="0 0 26 26" className="size-6">
          <path d="M2 18v-8h5.500M7.500 18V2h7v10M14.500 6.500h7v3" stroke="#605e5c" strokeWidth="1.5" />
          <path d="M24 8c-3 1-8 6-9.500 9l2.500 2.500C20 17.500 24 12 24 8zM14 17.500c-3 0-3.500 2-4 4-.5 1.500-2 2-3 2 3 2 9 1.500 10-3z" fill="#f3f2f1" stroke={K} strokeWidth="1.5" />
        </Icon>
      </button>
      <button aria-label="Analytics" className="flex size-8 items-center justify-center">
        <Icon box="0 0 26 26" className="size-[26px]">
          <circle cx="11" cy="11" r="9.700" stroke={K} strokeWidth="1.5" />
          <path d="m2 11 5-4 4 2.500L19 5M5 18v-6M9 19v-7M13 20v-7M17 18v-7" stroke={K} strokeWidth="1.5" />
          <path d="m18 18 7 6.500" stroke={K} strokeWidth="3" />
        </Icon>
      </button>
    </div>
    <svg viewBox="0 0 180 10" preserveAspectRatio="xMinYMid slice" className="mt-1 h-[10px] w-full" fill="none" stroke="#797775" aria-hidden="true">
      <path d="M0 8.500h17l7-7 7 7h149" />
    </svg>
    <div className="grid grid-cols-6 border-b border-[#d2d0ce] px-[6px] pt-[5px] pb-[2px]">
      {VISUALS.map((v) => (
        <button
          key={v.name}
          aria-label={v.name}
          className={clsx(
            "m-px flex h-[26px] items-center justify-center",
            v.name === "Line chart" && "border border-[#797775] bg-[#dcdbda]",
          )}
        >
          <Icon>{v.art}</Icon>
        </button>
      ))}
    </div>
    <div className="pr-[6px] pl-1">
      <Well title="X-axis">
        <Pill name="started_at">
          <SubField name="Year" />
          <SubField name="Month" />
        </Pill>
        <Pill name="Season" />
        <Pill name="DayName" />
        <Pill name="Hour" />
        <div className="h-[5px]" />
      </Well>
      <Well title="Y-axis"><Pill name="Count of ride_id" /></Well>
      <Well title="Secondary y-axis" />
      <Well title="Legend"><Pill name="member_casual" /></Well>
      <Well title="Small multiples" />
      <Well title="Tooltips" />
      <h3 className="flex h-[31px] items-center pt-[7px] pl-2 font-semibold text-[#494745]">Drill through</h3>
      <Toggle name="Cross-report" />
      <Toggle name="Keep all filters" on />
      <div className="mt-1 flex h-[26px] items-center rounded-xs border border-dashed border-[#b3b0ad] bg-white pl-2 whitespace-nowrap">
        Add drill-through fields here
      </div>
    </div>
  </aside>
);

/* ---------- data pane ---------- */

type Field = { name: string; on?: boolean; icon?: "fx" | "date" | "sum"; open?: boolean; mark?: boolean };

const TABLES: { name: string; used?: boolean; fields: Field[] }[] = [
  {
    name: "Divvy_Stations",
    fields: [{ name: "dpcapacity" }, { name: "id" }, { name: "latitude" }, { name: "longitude" }, { name: "name" }],
  },
  {
    name: "Divvy_Trips_2k",
    used: true,
    fields: [
      { name: "DayName", on: true, icon: "fx" },
      { name: "end_station_id" },
      { name: "end_station_name" },
      { name: "ended_at", icon: "date", open: true },
      { name: "Hour", on: true, icon: "fx" },
      { name: "member_casual", on: true },
      { name: "ride_id", on: true },
      { name: "rideable_type" },
      { name: "Season", on: true, icon: "fx" },
      { name: "start_station_id" },
      { name: "start_station_na..." },
      { name: "started_at", on: true, icon: "date", open: true, mark: true },
      { name: "trip_duration", icon: "sum" },
      { name: "WeekDay", icon: "sum" },
    ],
  },
];

const fieldIcons = {
  fx: (
    <Icon box="0 0 14 14" className="size-3.5">
      <path d="M5 11.500H2.500Q1 11.500 1 10V2.500Q1 1 2.500 1H10q1.500 0 1.500 1.500V4M4.500 1v10.500M4.500 5h2" strokeWidth="1.1" />
      <path d="M6 13.300c1.500 0 1.500-1 2-4s.7-4 2.300-4M6.700 8.500H10M9.500 9.500l3.800 4m0-4-3.800 4" strokeWidth="1.1" />
    </Icon>
  ),
  date: (
    <Icon box="0 0 14 14" className="size-3.5">
      <rect x="1.500" y="1.500" width="11" height="11" rx="2" strokeWidth="1.1" />
      <path d="M1.500 4.500h11" strokeWidth="1.1" />
      <path d="M6 7.500h5M3.500 10h5" strokeDasharray="1.3 1" />
    </Icon>
  ),
  sum: (
    <Icon box="0 0 14 14" className="size-3.5">
      <path d="M6 11.500H2.500Q1 11.500 1 10V2.500Q1 1 2.500 1H12M4.500 1v10.500M1 4.500h10M4.500 8H7" strokeWidth="1.1" />
      <path d="M13 6.500H8l2.800 3.200L8 13h5" strokeWidth="1.2" />
    </Icon>
  ),
};

const UsedBadge = () => (
  <svg viewBox="0 0 12 12" className="absolute -right-1.5 -bottom-1.5 size-3" aria-hidden="true">
    <circle cx="6" cy="6" r="6" fill={GREEN} />
    <path d="m3.500 6 1.800 1.800 3.200-3.300" fill="none" stroke="#fff" strokeWidth="1.2" />
  </svg>
);

const FieldRow = ({ field }: { field: Field }) => (
  <li className="flex h-6 items-center">
    <span className="flex w-[38px] justify-end pr-[5px] text-[#797775]">{field.open && <ChevronRight />}</span>
    <label className="flex items-center">
      <span className="grid size-3 place-items-center">
        <input
          type="checkbox"
          defaultChecked={field.on}
          className="peer col-start-1 row-start-1 size-3 appearance-none rounded-xs border border-[#797775] bg-[#faf9f8] checked:border-[#117865] checked:bg-[#117865]"
        />
        <svg viewBox="0 0 12 12" className="pointer-events-none col-start-1 row-start-1 hidden size-3 peer-checked:block" fill="none" stroke="#fff" strokeWidth="1.3">
          <path d="m2.500 6 2.500 2.500 4.500-5" />
        </svg>
      </span>
      <span className="relative mr-1 ml-2 flex size-3.5 items-center text-[#252423]">
        {field.icon && fieldIcons[field.icon]}
        {field.mark && <UsedBadge />}
      </span>
      <span className="whitespace-nowrap">{field.name}</span>
    </label>
  </li>
);

const DataPane = () => (
  <aside className="w-[181px] shrink-0 border-r border-[#1469b5] bg-[#f3f2f1] text-[11px] text-[#3b3a39]">
    <div className="flex h-[38px] items-center justify-between px-2">
      <h2 className="text-[15px] font-semibold text-[#252423]">Data</h2>
      <button aria-label="Collapse data"><DoubleChevron /></button>
    </div>
    <div className="px-1 pt-[7px]">
      <label className="flex h-[27px] items-center gap-[6px] rounded-xs border border-[#797775] px-2 text-[#605e5c]">
        <Magnifier className="size-3.5" />
        <input aria-label="Search data" placeholder="Search" className="w-full bg-transparent text-[13px] outline-none placeholder:text-[#605e5c]" />
      </label>
    </div>
    <div className="pt-[10px]">
      {TABLES.map((t) => (
        <section key={t.name}>
          <h3 className="flex h-6 items-center pl-[7px]">
            <button aria-label={`Toggle ${t.name}`} className="mr-1 text-[#797775]">
              <Icon box="0 0 12 12" className="size-3"><path d="m.5 3 5.500 5.500L11.500 3" strokeWidth="1" /></Icon>
            </button>
            <span className="relative mr-[5px] text-[#252423]">
              <Icon box="0 0 14 14" className="size-[13px]">
                <rect x="1" y="1" width="12" height="12" rx="2" strokeWidth="1.1" />
                <path d="M1 5h12M1 9h12M5 1v12M9.500 1v12" strokeWidth="1.1" />
              </Icon>
              {t.used && <UsedBadge />}
            </span>
            {t.name}
          </h3>
          <ul>
            {t.fields.map((f) => (
              <FieldRow key={f.name} field={f} />
            ))}
          </ul>
        </section>
      ))}
    </div>
  </aside>
);

/* ---------- taskbar ---------- */

const APPS: { name: string; art: ReactNode; active?: boolean }[] = [
  { name: "Start", art: <path d="M0 0h11.500v11.500H0zM12.500 0H24v11.500H12.500zM0 12.500h11.500V24H0zM12.500 12.500H24V24H12.500z" fill="#4fc9f7" /> },
  {
    name: "Copilot",
    art: <><path d="M7 1h8l-4 16H4c-4 0-4-3-3-6z" fill="#2b7de0" /><path d="M7 1h6L9 14H2z" fill="#43b66b" opacity="0.7" /><path d="m14 7h5c4 0 4 3 3 6l-3 8H9z" fill="#c85ad6" /><path d="M6 19h18v5H6z" fill="#f9b233" /><path d="M9 20v3M13 20v3M17 20v3M21 20v3" stroke="#5c3b00" /></>,
  },
  { name: "Task view", art: <><path d="M6 0h18v18H6z" fill="#f4f4f4" /><path d="M0 7h17v17H0z" fill="#6f7680" opacity="0.85" /></> },
  { name: "File Explorer", art: <><path d="M0 3q0-2 2-2h6l3 3v4H0z" fill="#d99c1a" /><path d="M0 6q0-1 1-1h22q1 0 1 1v18H0z" fill="#fcd257" /><path d="M5 18h14v6H5z" fill="#1b7cc8" /></> },
  { name: "Microsoft Store", art: <><path d="M6 7V3q0-2 2-2h8q2 0 2 2v4" fill="none" stroke="#3cb8e8" strokeWidth="2" /><path d="M0 6h24v18H0z" fill="#f5f5f5" /><path d="M7 11h4.500v4.500H7z" fill="#e74c26" /><path d="M12.500 11H17v4.500h-4.500z" fill="#7db928" /><path d="M7 16.500h4.500V21H7z" fill="#1fa4e8" /><path d="M12.500 16.500H17V21h-4.500z" fill="#fcb813" /></> },
  { name: "Edge", art: <><path d="M0 13C0 5 5 0 12 0s12 5 12 10c0 4-3 6-6 6-3 0-4-1.500-3-4 0-3-2-5-5-5-4 0-7 4-7 8z" fill="#35c4c4" /><path d="M15 1c6 1 9 5 9 9 0 4-3 6-6 6-3 0-4-1-3-3z" fill="#5bd66c" /><path d="M0 13c0-4 3-7 8-7 3 0 5 1 6 3-4-1-6 2-6 6 0 5 3 8 7 9H10C4 23 0 19 0 13z" fill="#1470c8" /></> },
  { name: "Gmail", art: <><path d="M1 6h5v18H1z" fill="#4285f4" /><path d="M18 6h5v18h-5z" fill="#34a853" /><path d="M1 5q2-2 4 0l7 6 7-6q2-2 4 0v5l-11 9L1 10z" fill="#ea4335" /><path d="M18 6q5-4 5 0v5l-5 3z" fill="#fbbc04" /></> },
  { name: "YouTube", art: <><rect y="4" width="24" height="20" rx="4" fill="#f60000" /><path d="M9 9v9l7-4.500z" fill="#fff" /></> },
  { name: "Yahoo Mail", art: <><rect x="1.500" y="4" width="21" height="22" rx="1" fill="#5f01d1" /><path d="M3 6h18l-9 7z" fill="#fff" /></> },
  { name: "Power BI", active: true, art: <><path d="M13 0h8v24h-8z" fill="#d69a0b" /><path d="M8 7h8v17H8z" fill="#f2c230" /><path d="M3 14h8v10H3z" fill="#fde27c" /></> },
  { name: "Chrome", art: <><circle cx="12" cy="13" r="12" fill="#fbc116" /><path d="M12 13 1.600 7A12 12 0 0 1 22.400 7z" fill="#e33b2e" /><path d="M12 13 1.600 7A12 12 0 0 0 10 25z" fill="#2da14c" /><path d="M12 7h10.500A12 12 0 0 0 1.600 7L6 13z" fill="#e33b2e" /><circle cx="12" cy="13" r="6" fill="#fff" /><circle cx="12" cy="13" r="4.700" fill="#3b7ded" /></> },
  { name: "Notepad", art: <><path d="M3 2h18v24H3z" fill="#51c3e3" /><path d="M5 0v4M9 0v4M13 0v4M17 0v4" stroke="#1d6f8c" strokeWidth="1.5" /><path d="M6 8h12M6 13h12M6 18h12" stroke="#12506e" strokeWidth="2" /></> },
  { name: "Snipping Tool", art: <><rect width="18" height="21" rx="2" fill="#f7f7f7" /><path d="M3 14V4h11" fill="none" stroke="#d1482f" strokeWidth="3" strokeDasharray="3 1" /><path d="M14 7v13M7 17h13" stroke="#8b949e" strokeWidth="3" /><circle cx="22" cy="16" r="2.500" fill="none" stroke="#2689d8" strokeWidth="2" /></> },
];

const Taskbar = () => (
  <footer className="flex h-[31px] shrink-0 justify-center gap-1 overflow-hidden border-t border-[#41637d] bg-[linear-gradient(90deg,#173c75,#254a80_3%,#254a80_97%,#173c75)]">
    {APPS.map((a) => (
      <button
        key={a.name}
        aria-label={a.name}
        className={clsx("mt-[3px] flex h-10 w-10 shrink-0 justify-center rounded-sm pt-2", a.active && "bg-[#36588a]")}
      >
        <svg viewBox="0 0 24 24" className="size-6 overflow-visible" aria-hidden="true">{a.art}</svg>
      </button>
    ))}
  </footer>
);

const App = () => (
  <div className="flex h-screen w-full flex-col overflow-hidden bg-white font-['Open_Sans',sans-serif]">
    <TitleBar />
    <Ribbon />
    <div className="flex min-h-0 flex-1">
      <Rail />
      <div className="flex min-w-0 flex-1 flex-col">
        <div className="flex min-h-0 flex-1">
          <Canvas />
          <FiltersPane />
        </div>
        <PageTabs />
      </div>
      <VisualizationsPane />
      <DataPane />
    </div>
    <Taskbar />
  </div>
);

export default App;
